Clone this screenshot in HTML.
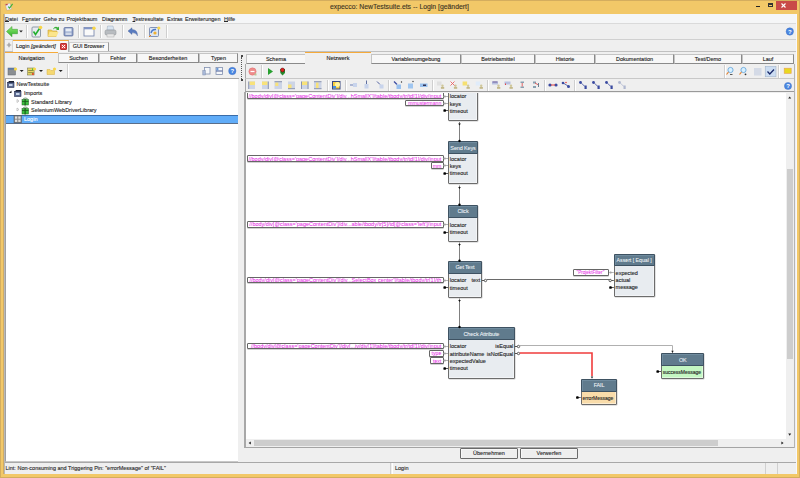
<!DOCTYPE html>
<html><head><meta charset="utf-8">
<style>
*{box-sizing:border-box;margin:0;padding:0}
html,body{width:800px;height:478px;overflow:hidden}
body{position:relative;background:#F2C868;font-family:"Liberation Sans",sans-serif;font-size:5.5px;color:#2a2a2a;-webkit-text-stroke:0.12px currentColor}
.a{position:absolute}
.t{position:absolute;white-space:nowrap;line-height:1}
.tab{position:absolute;background:#F7F7F7;border:1px solid #C4C4C4;border-right-color:#8A8A8A;border-bottom-color:#8A8A8A;text-align:center;line-height:8px;white-space:nowrap;color:#222}
.tsel{position:absolute;background:#EFEFEF;border-top:1.5px solid #F5AA3A;text-align:center;white-space:nowrap;color:#222;line-height:8px;padding-top:1px}
.sep{position:absolute;width:2px;border-left:1px solid #CFCFCF;border-right:1px solid #FFFFFF}
.ico{position:absolute}
u{text-decoration-thickness:0.5px;text-underline-offset:-0.2px}
</style></head><body>

<!-- title bar -->
<div class="a" style="left:0;top:0;width:800px;height:478px;border:1px solid #D4AD5E"></div>
<div class="t" style="left:330px;top:4px;font-size:6.85px;color:#3b3323">expecco: NewTestsuite.ets -- Login [geändert]</div>
<!-- app icon -->
<svg class="a" style="left:4px;top:2px" width="10" height="9" viewBox="0 0 10 9">
 <path d="M1.2 2.2 L6.2 1 L7.8 7.2 L2.8 8.6Z" fill="#E6ECF8" stroke="#C89A50" stroke-width="0.4"/>
 <path d="M1.4 2.3 L3.5 1.8 L3.8 3 L1.7 3.5Z" fill="#C04848"/>
 <path d="M4.2 4.6 L5.6 6 L8.6 1.8" fill="none" stroke="#40B040" stroke-width="1.2"/>
</svg>
<!-- window controls -->
<div class="a" style="left:756px;top:6px;width:4px;height:1px;background:#222"></div>
<div class="a" style="left:768px;top:3px;width:5px;height:4px;border:1px solid #333;border-top-width:2px"></div>
<div class="a" style="left:776px;top:1px;width:21px;height:9px;background:#C94A48"></div>


<!-- client area -->
<div class="a" style="left:3px;top:14px;width:794px;height:460px;background:#EFEFEF;border-left:1px solid #D2AC62;border-right:1px solid #F8F8FC"></div>
<div class="a" style="left:4px;top:14px;width:1px;height:460px;background:#B8B8B8"></div>

<!-- menu bar -->
<div class="a" style="left:5px;top:14px;width:791px;height:10px;background:#F5F6F7;border-bottom:1px solid #DADADA"></div>
<div class="t" style="left:5px;top:17px"><u>D</u>atei</div>
<div class="t" style="left:22px;top:17px">F<u>e</u>nster</div>
<div class="t" style="left:43.5px;top:17px">Gehe zu</div>
<div class="t" style="left:66.5px;top:17px">Projektbaum</div>
<div class="t" style="left:102px;top:17px">Diagramm</div>
<div class="t" style="left:132.5px;top:17px"><u>T</u>estresultate</div>
<div class="t" style="left:167px;top:17px">Extras</div>
<div class="t" style="left:185px;top:17px">Erweiterungen</div>
<div class="t" style="left:224px;top:17px"><u>H</u>ilfe</div>

<!-- main toolbar -->
<div class="a" style="left:5px;top:24px;width:791px;height:16px;background:#EFEFEF;border-bottom:1px solid #D0D0D0"></div>
<div class="sep" style="left:26px;top:25px;height:13px"></div>
<div class="sep" style="left:78px;top:25px;height:13px"></div>
<div class="sep" style="left:100px;top:25px;height:13px"></div>
<div class="sep" style="left:122px;top:25px;height:13px"></div>
<div class="sep" style="left:144px;top:25px;height:13px"></div>
<div class="sep" style="left:166px;top:25px;height:13px"></div>

<!-- editor tab bar -->
<div class="a" style="left:5px;top:51px;width:791px;height:1px;background:#C0C0C0"></div>
<div class="a" style="left:5px;top:40px;width:8px;height:11px;background:#F0F0F0;border-right:1px solid #D8D8D8"></div><svg class="a" style="left:6px;top:42px" width="6" height="6" viewBox="0 0 6 6"><path d="M3 0.8 V5.2 M0.8 3 H5.2" stroke="#9A9A9A" stroke-width="1.2"/></svg>
<div class="a" style="left:13px;top:40px;width:56px;height:12px;background:#F7F7F7;border-top:1.5px solid #F5AA3A;border-right:1px solid #B0B0B0"></div>
<div class="t" style="left:16px;top:44px;color:#222">Login <i>[geändert]</i></div>
<div class="a" style="left:60px;top:43px;width:7px;height:6.5px;background:#DC4848;border-radius:1px;border:0.5px solid #B83030"></div>
<svg class="a" style="left:60px;top:43px" width="7" height="7" viewBox="0 0 7 7"><path d="M2 2 L5 5 M5 2 L2 5" stroke="#fff" stroke-width="1"/></svg>
<div class="tab" style="left:68.5px;top:42px;width:40px;height:9px;line-height:7.5px;border-bottom:none;border-color:#D0D0D0 #9A9A9A #9A9A9A #D0D0D0;background:#F8F8F8">GUI Browser</div>

<!-- LEFT PANEL -->
<div class="tsel" style="left:5px;top:52px;width:53px;height:11px">Navigation</div>
<div class="tab" style="left:58px;top:53px;width:41px;height:10px">Suchen</div>
<div class="tab" style="left:99px;top:53px;width:38px;height:10px">Fehler</div>
<div class="tab" style="left:137px;top:53px;width:62px;height:10px">Besonderheiten</div>
<div class="tab" style="left:199px;top:53px;width:39px;height:10px">Typen</div>
<!-- left toolbar -->
<div class="a" style="left:5px;top:63px;width:234px;height:16px;background:#EFEFEF;border-bottom:1px solid #A8A8A8"></div>
<div class="sep" style="left:67px;top:64px;height:14px"></div>
<!-- tree -->
<div class="a" style="left:5px;top:79px;width:233px;height:383px;background:#FFFFFF;border-left:1px solid #A0A0A0;border-bottom:1px solid #C8C8C8"></div>
<div class="a" style="left:6px;top:115px;width:231.5px;height:9px;background:#60ACF8;border-top:1px solid #3A6CA8;border-bottom:1px solid #5A6E8A"></div>
<div class="t" style="left:16.5px;top:82px">NewTestsuite</div>
<div class="t" style="left:24px;top:90.5px">Imports</div>
<div class="t" style="left:31px;top:99.5px">Standard Library</div>
<div class="t" style="left:31px;top:108px">SeleniumWebDriverLibrary</div>
<div class="t" style="left:24px;top:117px;color:#fff">Login</div>

<!-- splitter -->
<div class="a" style="left:241px;top:57px;width:2px;height:22px;border-left:1px dotted #555"></div>
<div class="a" style="left:240.6px;top:54.6px;width:2px;height:2.2px;border-radius:50%;background:#111"></div>
<div class="a" style="left:240.6px;top:78.6px;width:2px;height:2.2px;border-radius:50%;background:#111"></div>

<!-- RIGHT PANEL -->
<div class="tab" style="left:246px;top:54px;width:60px;height:10px">Schema</div>
<div class="tsel" style="left:305px;top:52px;width:66px;height:12px">Netzwerk</div>
<div class="tab" style="left:371px;top:54px;width:90px;height:10px">Variablenumgebung</div>
<div class="tab" style="left:461px;top:54px;width:74px;height:10px">Betriebsmittel</div>
<div class="tab" style="left:535px;top:54px;width:60px;height:10px">Historie</div>
<div class="tab" style="left:595px;top:54px;width:79px;height:10px">Dokumentation</div>
<div class="tab" style="left:674px;top:54px;width:68px;height:10px">Test/Demo</div>
<div class="tab" style="left:742px;top:54px;width:52px;height:10px">Lauf</div>
<!-- toolbar1 -->
<div class="a" style="left:245px;top:64px;width:549px;height:15px;background:#EFEFEF;border-left:1px solid #A8A8A8;border-bottom:1px solid #C8C8C8"></div>
<div class="sep" style="left:261px;top:65px;height:13px"></div>
<div class="sep" style="left:724px;top:65px;height:13px"></div>
<div class="sep" style="left:778px;top:65px;height:13px"></div>
<!-- toolbar2 -->
<div class="a" style="left:245px;top:79px;width:549px;height:13px;background:#EFEFEF;border-left:1px solid #A8A8A8;border-bottom:1px solid #9A9A9A"></div>
<div class="sep" style="left:327px;top:80px;height:11px"></div>
<div class="sep" style="left:345px;top:80px;height:11px"></div>
<div class="sep" style="left:388px;top:80px;height:11px"></div>
<div class="sep" style="left:432px;top:80px;height:11px"></div>
<div class="sep" style="left:487px;top:80px;height:11px"></div>
<div class="sep" style="left:544px;top:80px;height:11px"></div>
<div class="sep" style="left:574px;top:80px;height:11px"></div>

<!-- canvas -->
<div class="a" style="left:244px;top:92px;width:551px;height:356px;background:#EFEFEF;border-left:2px solid #A8A8A8;border-bottom:1px solid #A4A4A4"></div>
<div class="a" id="canvas" style="left:246px;top:93px;width:540px;height:346px;background:#FFFFFF;overflow:hidden"><div class="a" style="left:-246px;top:-93px;width:800px;height:478px">
<div class="a" style="left:247px;top:92px;width:196.5px;height:7px;background:#fff;border:1px solid #666;border-radius:1px;box-shadow:0 0.6px 0 #A8A8A8;overflow:hidden"><div class="t" style="left:0;right:1.2px;top:1px;text-align:right;color:#E838E8;font-size:5.5px;-webkit-text-stroke:0.06px #E838E8;text-decoration:underline;text-decoration-thickness:0.3px">//body/div[@class='pageContentDiv']/div...hSmallX']/table/tbody/tr/td[1]/div/input</div></div>
<div class="a" style="left:405px;top:99.6px;width:38.5px;height:6.900000000000006px;background:#fff;border:1px solid #666;border-radius:1px;box-shadow:0 0.6px 0 #A8A8A8;overflow:hidden"><div class="t" style="left:0;right:1.2px;top:0.7000000000000028px;text-align:right;color:#E838E8;font-size:5.2px;-webkit-text-stroke:0.06px #E838E8;text-decoration:underline;text-decoration-thickness:0.3px">mmustermann</div></div>
<div class="a" style="left:247px;top:155px;width:196.5px;height:6.5px;background:#fff;border:1px solid #666;border-radius:1px;box-shadow:0 0.6px 0 #A8A8A8;overflow:hidden"><div class="t" style="left:0;right:1.2px;top:0.5999999999999943px;text-align:right;color:#E838E8;font-size:5.5px;-webkit-text-stroke:0.06px #E838E8;text-decoration:underline;text-decoration-thickness:0.3px">//body/div[@class='pageContentDiv']/div...hSmallX']/table/tbody/tr/td[1]/div/input</div></div>
<div class="a" style="left:431px;top:162px;width:12.5px;height:6.800000000000011px;background:#fff;border:1px solid #666;border-radius:1px;box-shadow:0 0.6px 0 #A8A8A8;overflow:hidden"><div class="t" style="left:0;right:1.2px;top:0.9000000000000057px;text-align:right;color:#E838E8;font-size:5.2px;-webkit-text-stroke:0.06px #E838E8;text-decoration:underline;text-decoration-thickness:0.3px">mm</div></div>
<div class="a" style="left:247px;top:221.3px;width:196.5px;height:6.5px;background:#fff;border:1px solid #666;border-radius:1px;box-shadow:0 0.6px 0 #A8A8A8;overflow:hidden"><div class="t" style="left:0;right:1.2px;top:0.19999999999998863px;text-align:right;color:#E838E8;font-size:5.5px;-webkit-text-stroke:0.06px #E838E8;text-decoration:underline;text-decoration-thickness:0.3px">//body/div[@class='pageContentDiv']/div...able/tbody/tr[5]/td[@class='left']/input</div></div>
<div class="a" style="left:247px;top:276.5px;width:196.5px;height:6.5px;background:#fff;border:1px solid #666;border-radius:1px;box-shadow:0 0.6px 0 #A8A8A8;overflow:hidden"><div class="t" style="left:0;right:1.2px;top:0.5px;text-align:right;color:#E838E8;font-size:5.5px;-webkit-text-stroke:0.06px #E838E8;text-decoration:underline;text-decoration-thickness:0.3px">//body/div[@class='pageContentDiv']/div...SelectBox center']/table/tbody/tr[1]/th</div></div>
<div class="a" style="left:247px;top:342.5px;width:196.5px;height:6.5px;background:#fff;border:1px solid #666;border-radius:1px;box-shadow:0 0.6px 0 #A8A8A8;overflow:hidden"><div class="t" style="left:0;right:1.2px;top:0.5px;text-align:right;color:#E838E8;font-size:5.5px;-webkit-text-stroke:0.06px #E838E8;text-decoration:underline;text-decoration-thickness:0.3px">//body/div[@class='pageContentDiv']/div[...iv/div[1]/table/tbody/tr/td[1]/div/input</div></div>
<div class="a" style="left:429px;top:350px;width:14.5px;height:6.600000000000023px;background:#fff;border:1px solid #666;border-radius:1px;box-shadow:0 0.6px 0 #A8A8A8;overflow:hidden"><div class="t" style="left:0;right:1.2px;top:0.39999999999997726px;text-align:right;color:#E838E8;font-size:5.2px;-webkit-text-stroke:0.06px #E838E8;text-decoration:underline;text-decoration-thickness:0.3px">type</div></div>
<div class="a" style="left:430px;top:357.3px;width:13.5px;height:6.5px;background:#fff;border:1px solid #666;border-radius:1px;box-shadow:0 0.6px 0 #A8A8A8;overflow:hidden"><div class="t" style="left:0;right:1.2px;top:0.39999999999997726px;text-align:right;color:#E838E8;font-size:5.2px;-webkit-text-stroke:0.06px #E838E8;text-decoration:underline;text-decoration-thickness:0.3px">text</div></div>
<div class="a" style="left:573px;top:269px;width:36px;height:6.5px;background:#fff;border:1px solid #666;border-radius:1px;box-shadow:0 0.6px 0 #A8A8A8;overflow:hidden"><div class="t" style="left:0;right:1.2px;top:0.5px;text-align:center;color:#E838E8;font-size:4.6px;-webkit-text-stroke:0.06px #E838E8;text-decoration:underline;text-decoration-thickness:0.3px">"ProjektFilter"</div></div>
<div class="a" style="left:448px;top:60px;width:30px;height:61px;background:#E8ECF0;border:1px solid #6C6C6C;border-bottom-width:1.4px;border-radius:1px;box-shadow:inset -0.7px -0.7px 0 rgba(255,255,255,0.6),0.5px 0.5px 0 #C8C8C8"></div>
<div class="a" style="left:448px;top:60px;width:30px;height:12px;background:#607B8D;border:1px solid #3E5262;border-radius:1px 1px 0 0;box-shadow:inset 0.7px 0.7px 0 rgba(140,170,190,0.5)"></div>
<div class="t" style="left:449.8px;top:94.2px;color:#262626;font-size:5.5px">locator</div>
<div class="t" style="left:449.8px;top:101.7px;color:#262626;font-size:5.5px">keys</div>
<div class="t" style="left:449.8px;top:108.8px;color:#262626;font-size:5.5px">timeout</div>
<div class="a" style="left:448px;top:141.2px;width:30px;height:43.30000000000001px;background:#E8ECF0;border:1px solid #6C6C6C;border-bottom-width:1.4px;border-radius:1px;box-shadow:inset -0.7px -0.7px 0 rgba(255,255,255,0.6),0.5px 0.5px 0 #C8C8C8"></div>
<div class="a" style="left:448px;top:141.2px;width:30px;height:12.400000000000006px;background:#607B8D;border:1px solid #3E5262;border-radius:1px 1px 0 0;box-shadow:inset 0.7px 0.7px 0 rgba(140,170,190,0.5)"></div>
<div class="t" style="left:448px;top:145.59999999999997px;width:30px;text-align:center;color:#F2F6F9;font-size:5.5px;letter-spacing:-0.15px;-webkit-text-stroke:0.06px #F2F6F9">Send Keys</div>
<div class="t" style="left:449.8px;top:156.79999999999998px;color:#262626;font-size:5.5px">locator</div>
<div class="t" style="left:449.8px;top:164.1px;color:#262626;font-size:5.5px">keys</div>
<div class="t" style="left:449.8px;top:171.29999999999998px;color:#262626;font-size:5.5px">timeout</div>
<div class="a" style="left:448px;top:205px;width:30px;height:36.5px;background:#E8ECF0;border:1px solid #6C6C6C;border-bottom-width:1.4px;border-radius:1px;box-shadow:inset -0.7px -0.7px 0 rgba(255,255,255,0.6),0.5px 0.5px 0 #C8C8C8"></div>
<div class="a" style="left:448px;top:205px;width:30px;height:12.5px;background:#607B8D;border:1px solid #3E5262;border-radius:1px 1px 0 0;box-shadow:inset 0.7px 0.7px 0 rgba(140,170,190,0.5)"></div>
<div class="t" style="left:448px;top:209.45px;width:30px;text-align:center;color:#F2F6F9;font-size:5.5px;letter-spacing:-0.2px;-webkit-text-stroke:0.06px #F2F6F9">Click</div>
<div class="t" style="left:449.8px;top:222.7px;color:#262626;font-size:5.5px">locator</div>
<div class="t" style="left:449.8px;top:230.2px;color:#262626;font-size:5.5px">timeout</div>
<div class="a" style="left:448px;top:261px;width:33.80000000000001px;height:36.80000000000001px;background:#E8ECF0;border:1px solid #6C6C6C;border-bottom-width:1.4px;border-radius:1px;box-shadow:inset -0.7px -0.7px 0 rgba(255,255,255,0.6),0.5px 0.5px 0 #C8C8C8"></div>
<div class="a" style="left:448px;top:261px;width:33.80000000000001px;height:12.5px;background:#607B8D;border:1px solid #3E5262;border-radius:1px 1px 0 0;box-shadow:inset 0.7px 0.7px 0 rgba(140,170,190,0.5)"></div>
<div class="t" style="left:448px;top:265.45px;width:33.80000000000001px;text-align:center;color:#F2F6F9;font-size:5.5px;letter-spacing:-0.2px;-webkit-text-stroke:0.06px #F2F6F9">Get Text</div>
<div class="t" style="left:449.8px;top:278.2px;color:#262626;font-size:5.5px">locator</div>
<div class="t" style="left:449.8px;top:285.5px;color:#262626;font-size:5.5px">timeout</div>
<div class="t" style="left:448px;top:278.2px;width:32.30000000000001px;text-align:right;color:#262626">text</div>
<div class="a" style="left:448px;top:327.2px;width:66.79999999999995px;height:51.60000000000002px;background:#E8ECF0;border:1px solid #6C6C6C;border-bottom-width:1.4px;border-radius:1px;box-shadow:inset -0.7px -0.7px 0 rgba(255,255,255,0.6),0.5px 0.5px 0 #C8C8C8"></div>
<div class="a" style="left:448px;top:327.2px;width:66.79999999999995px;height:12.400000000000034px;background:#607B8D;border:1px solid #3E5262;border-radius:1px 1px 0 0;box-shadow:inset 0.7px 0.7px 0 rgba(140,170,190,0.5)"></div>
<div class="t" style="left:448px;top:331.59999999999997px;width:66.79999999999995px;text-align:center;color:#F2F6F9;font-size:5.5px;letter-spacing:-0.1px;-webkit-text-stroke:0.06px #F2F6F9">Check Attribute</div>
<div class="t" style="left:449.8px;top:344.2px;color:#262626;font-size:5.5px">locator</div>
<div class="t" style="left:449.8px;top:351.59999999999997px;color:#262626;font-size:5.5px">attributeName</div>
<div class="t" style="left:449.8px;top:358.9px;color:#262626;font-size:5.5px">expectedValue</div>
<div class="t" style="left:449.8px;top:366.2px;color:#262626;font-size:5.5px">timeout</div>
<div class="t" style="left:448px;top:344.2px;width:65.29999999999995px;text-align:right;color:#262626">isEqual</div>
<div class="t" style="left:448px;top:351.59999999999997px;width:65.29999999999995px;text-align:right;color:#262626">isNotEqual</div>
<div class="a" style="left:613.8px;top:254px;width:40.80000000000007px;height:43.39999999999998px;background:#E8ECF0;border:1px solid #6C6C6C;border-bottom-width:1.4px;border-radius:1px;box-shadow:inset -0.7px -0.7px 0 rgba(255,255,255,0.6),0.5px 0.5px 0 #C8C8C8"></div>
<div class="a" style="left:613.8px;top:254px;width:40.80000000000007px;height:12.399999999999977px;background:#607B8D;border:1px solid #3E5262;border-radius:1px 1px 0 0;box-shadow:inset 0.7px 0.7px 0 rgba(140,170,190,0.5)"></div>
<div class="t" style="left:613.8px;top:258.4px;width:40.80000000000007px;text-align:center;color:#F2F6F9;font-size:5.2px;letter-spacing:0px;-webkit-text-stroke:0.06px #F2F6F9">Assert [ Equal ]</div>
<div class="t" style="left:615.5999999999999px;top:270.7px;color:#262626;font-size:5.5px">expected</div>
<div class="t" style="left:615.5999999999999px;top:278.2px;color:#262626;font-size:5.5px">actual</div>
<div class="t" style="left:615.5999999999999px;top:285.4px;color:#262626;font-size:5.5px">message</div>
<div class="a" style="left:661px;top:353px;width:43.299999999999955px;height:25.80000000000001px;background:#C4F7C2;border:1px solid #6C6C6C;border-bottom-width:1.4px;border-radius:1px;box-shadow:inset -0.7px -0.7px 0 rgba(255,255,255,0.6),0.5px 0.5px 0 #C8C8C8"></div>
<div class="a" style="left:661px;top:353px;width:43.299999999999955px;height:12.800000000000011px;background:#607B8D;border:1px solid #3E5262;border-radius:1px 1px 0 0;box-shadow:inset 0.7px 0.7px 0 rgba(140,170,190,0.5)"></div>
<div class="t" style="left:661px;top:357.59999999999997px;width:43.299999999999955px;text-align:center;color:#F2F6F9;font-size:5.5px;letter-spacing:-0.2px;-webkit-text-stroke:0.06px #F2F6F9">OK</div>
<div class="t" style="left:662.8px;top:370.09999999999997px;color:#262626;font-size:5.0px">successMessage</div>
<div class="a" style="left:580.7px;top:378.8px;width:36.69999999999993px;height:26.0px;background:#F9DCAA;border:1px solid #6C6C6C;border-bottom-width:1.4px;border-radius:1px;box-shadow:inset -0.7px -0.7px 0 rgba(255,255,255,0.6),0.5px 0.5px 0 #C8C8C8"></div>
<div class="a" style="left:580.7px;top:378.8px;width:36.69999999999993px;height:12.800000000000011px;background:#607B8D;border:1px solid #3E5262;border-radius:1px 1px 0 0;box-shadow:inset 0.7px 0.7px 0 rgba(140,170,190,0.5)"></div>
<div class="t" style="left:580.7px;top:383.40000000000003px;width:36.69999999999993px;text-align:center;color:#F2F6F9;font-size:5.5px;letter-spacing:-0.2px;-webkit-text-stroke:0.06px #F2F6F9">FAIL</div>
<div class="t" style="left:582.5px;top:395.5px;color:#262626;font-size:5.0px">errorMessage</div>
<svg class="a" style="left:0;top:0" width="800" height="478" viewBox="0 0 800 478"><line x1="459.5" y1="122" x2="459.5" y2="141.2" stroke="#808080" stroke-width="1"/><path d="M458.2 123.6 L460.8 123.6 L459.5 125.6Z" fill="#111"/><circle cx="459.5" cy="141.0" r="1.2" fill="#000"/><line x1="459.5" y1="185.5" x2="459.5" y2="205" stroke="#808080" stroke-width="1"/><path d="M458.2 187.1 L460.8 187.1 L459.5 189.1Z" fill="#111"/><circle cx="459.5" cy="204.8" r="1.2" fill="#000"/><line x1="459.5" y1="242.5" x2="459.5" y2="261" stroke="#808080" stroke-width="1"/><path d="M458.2 244.1 L460.8 244.1 L459.5 246.1Z" fill="#111"/><circle cx="459.5" cy="260.8" r="1.2" fill="#000"/><line x1="459.5" y1="298.5" x2="459.5" y2="327.2" stroke="#808080" stroke-width="1"/><path d="M458.2 300.1 L460.8 300.1 L459.5 302.1Z" fill="#111"/><circle cx="459.5" cy="327.0" r="1.2" fill="#000"/><line x1="443.5" y1="96.5" x2="448" y2="96.5" stroke="#B4B4B4" stroke-width="1"/><rect x="443.7" y="95.5" width="2.2" height="2" rx="0.8" fill="#A4A4A4"/><line x1="443.5" y1="103.5" x2="448" y2="103.5" stroke="#B4B4B4" stroke-width="1"/><rect x="443.7" y="102.5" width="2.2" height="2" rx="0.8" fill="#A4A4A4"/><line x1="445" y1="110.5" x2="448" y2="110.5" stroke="#555" stroke-width="1"/><rect x="443.4" y="109.2" width="2.6" height="2.6" rx="0.9" fill="#000"/><line x1="443.5" y1="158.5" x2="448" y2="158.5" stroke="#B4B4B4" stroke-width="1"/><rect x="443.7" y="157.5" width="2.2" height="2" rx="0.8" fill="#A4A4A4"/><line x1="443.5" y1="165.5" x2="448" y2="165.5" stroke="#B4B4B4" stroke-width="1"/><rect x="443.7" y="164.5" width="2.2" height="2" rx="0.8" fill="#A4A4A4"/><line x1="445" y1="173.5" x2="448" y2="173.5" stroke="#555" stroke-width="1"/><rect x="443.4" y="172.2" width="2.6" height="2.6" rx="0.9" fill="#000"/><line x1="443.5" y1="224.5" x2="448" y2="224.5" stroke="#B4B4B4" stroke-width="1"/><rect x="443.7" y="223.5" width="2.2" height="2" rx="0.8" fill="#A4A4A4"/><line x1="445" y1="232.5" x2="448" y2="232.5" stroke="#555" stroke-width="1"/><rect x="443.4" y="231.2" width="2.6" height="2.6" rx="0.9" fill="#000"/><line x1="443.5" y1="280.5" x2="448" y2="280.5" stroke="#B4B4B4" stroke-width="1"/><rect x="443.7" y="279.5" width="2.2" height="2" rx="0.8" fill="#A4A4A4"/><line x1="445" y1="287.5" x2="448" y2="287.5" stroke="#555" stroke-width="1"/><rect x="443.4" y="286.2" width="2.6" height="2.6" rx="0.9" fill="#000"/><line x1="481.8" y1="280.5" x2="484.3" y2="280.5" stroke="#555" stroke-width="1"/><circle cx="485.5" cy="280.5" r="1.2" fill="#fff" stroke="#333" stroke-width="0.8"/><line x1="443.5" y1="346.5" x2="448" y2="346.5" stroke="#B4B4B4" stroke-width="1"/><rect x="443.7" y="345.5" width="2.2" height="2" rx="0.8" fill="#A4A4A4"/><line x1="443.5" y1="353.5" x2="448" y2="353.5" stroke="#B4B4B4" stroke-width="1"/><rect x="443.7" y="352.5" width="2.2" height="2" rx="0.8" fill="#A4A4A4"/><line x1="443.5" y1="360.5" x2="448" y2="360.5" stroke="#B4B4B4" stroke-width="1"/><rect x="443.7" y="359.5" width="2.2" height="2" rx="0.8" fill="#A4A4A4"/><line x1="445" y1="368.5" x2="448" y2="368.5" stroke="#555" stroke-width="1"/><rect x="443.4" y="367.2" width="2.6" height="2.6" rx="0.9" fill="#000"/><line x1="514.8" y1="346.5" x2="517.3" y2="346.5" stroke="#555" stroke-width="1"/><circle cx="518.5" cy="346.5" r="1.2" fill="#fff" stroke="#333" stroke-width="0.8"/><line x1="514.8" y1="353.5" x2="517.3" y2="353.5" stroke="#555" stroke-width="1"/><circle cx="518.5" cy="353.5" r="1.2" fill="#fff" stroke="#333" stroke-width="0.8"/><line x1="609.3" y1="272.5" x2="613.8" y2="272.5" stroke="#B4B4B4" stroke-width="1"/><rect x="609.5" y="271.5" width="2.2" height="2" rx="0.8" fill="#A4A4A4"/><line x1="611.3" y1="280.5" x2="613.8" y2="280.5" stroke="#555" stroke-width="1"/><circle cx="610.1999999999999" cy="280.5" r="1.2" fill="#fff" stroke="#333" stroke-width="0.8"/><line x1="610.8" y1="287.5" x2="613.8" y2="287.5" stroke="#555" stroke-width="1"/><rect x="609.1999999999999" y="286.2" width="2.6" height="2.6" rx="0.9" fill="#000"/><line x1="658" y1="371.5" x2="661" y2="371.5" stroke="#555" stroke-width="1"/><rect x="656.4" y="370.2" width="2.6" height="2.6" rx="0.9" fill="#000"/><line x1="577.7" y1="397.5" x2="580.7" y2="397.5" stroke="#555" stroke-width="1"/><rect x="576.1" y="396.2" width="2.6" height="2.6" rx="0.9" fill="#000"/><line x1="486.8" y1="279.5" x2="609.3" y2="279.5" stroke="#6A6A6A" stroke-width="1"/><polyline points="519.8,345.5 672.5,345.5 672.5,352.8" fill="none" stroke="#B0B0B0" stroke-width="1"/><path d="M671.3 350.8 L673.7 350.8 L672.5 353Z" fill="#222"/><polyline points="519.8,353 592,353 592,376" fill="none" stroke="#F03C3C" stroke-width="1.6"/><path d="M590.8 376.6 L593.2 376.6 L592 378.8Z" fill="#222"/></svg>
</div></div>
<!-- scrollbars -->
<div class="a" style="left:787px;top:169px;width:6px;height:190px;background:#CDCDCD"></div>
<div class="a" style="left:254px;top:440px;width:464px;height:6px;background:#CDCDCD"></div>
<svg class="a" style="left:0;top:0" width="800" height="478" viewBox="0 0 800 478">
 <path d="M788.2 98.6 L791.2 98.6 L789.7 96.4Z" fill="#222"/>
 <path d="M788.2 433.6 L791.2 433.6 L789.7 435.8Z" fill="#222"/>
 <path d="M250.8 441.5 L250.8 444.5 L248.6 443Z" fill="#222"/>
 <path d="M781.4 441.5 L781.4 444.5 L783.6 443Z" fill="#222"/>
 <circle cx="771" cy="468.2" r="2.7" fill="none" stroke="#8A8A8A" stroke-width="0.7"/>
 <line x1="768.3" y1="468.2" x2="773.7" y2="468.2" stroke="#8A8A8A" stroke-width="0.6"/>
 <line x1="781.5" y1="3.5" x2="785.5" y2="7.5" stroke="#fff" stroke-width="1.1"/>
 <line x1="785.5" y1="3.5" x2="781.5" y2="7.5" stroke="#fff" stroke-width="1.1"/>
</svg>
<div class="a" style="left:794px;top:64px;width:1px;height:384px;background:#B4B4B4"></div>

<!-- button bar -->
<div class="a" style="left:460px;top:448px;width:58px;height:11px;background:#EEEEEE;border:1px solid #6A6A6A;border-radius:1px;box-shadow:inset 0.6px 0.6px 0 #fff;text-align:center;line-height:9px">Übernehmen</div>
<div class="a" style="left:520px;top:448px;width:58px;height:11px;background:#EEEEEE;border:1px solid #6A6A6A;border-radius:1px;box-shadow:inset 0.6px 0.6px 0 #fff;text-align:center;line-height:9px">Verwerfen</div>

<!-- status bar -->
<div class="a" style="left:5px;top:462px;width:791px;height:1px;background:#A8A8A8"></div>
<div class="a" style="left:5px;top:463px;width:791px;height:11px;background:#EFEFEF"></div>
<div class="t" style="left:5.5px;top:465.5px">Lint: Non-consuming and Triggering Pin: "errorMessage" of "FAIL"</div>
<div class="a" style="left:390px;top:463px;width:3px;height:11px;border-left:1px solid #D0D0D0;border-right:1px solid #fff"></div>
<div class="t" style="left:395px;top:465.5px">Login</div>
<div class="a" style="left:765px;top:463px;width:1px;height:11px;background:#D0D0D0"></div>
<div class="a" style="left:777px;top:463px;width:1px;height:11px;background:#D0D0D0"></div>

<!-- ICONS main toolbar -->
<svg class="a" style="left:5px;top:25px" width="20" height="14" viewBox="0 0 20 14">
 <defs><linearGradient id="gA" x1="0" y1="0" x2="0" y2="1"><stop offset="0" stop-color="#8EE870"/><stop offset="1" stop-color="#2FB02A"/></linearGradient></defs>
 <path d="M1.5 6.5 L7 1.5 L7 4.3 L12.5 4.3 L12.5 8.7 L7 8.7 L7 11.8 Z" fill="url(#gA)" stroke="#3A9A30" stroke-width="0.5"/>
 <path d="M14.2 5.4 L17.8 5.4 L16 7.4 Z" fill="#222"/>
</svg>
<svg class="a" style="left:31px;top:25px" width="12" height="13" viewBox="0 0 12 13">
 <rect x="1" y="2" width="8.5" height="10" rx="1" fill="#E8ECF0" stroke="#7A8694" stroke-width="0.8"/>
 <path d="M2.5 6.5 L4.5 9.5 L8.5 3.5" fill="none" stroke="#22B030" stroke-width="1.6"/>
 <circle cx="9.5" cy="2.5" r="1.8" fill="#F8D648"/>
</svg>
<svg class="a" style="left:47px;top:25px" width="13" height="13" viewBox="0 0 13 13">
 <path d="M1 5 L4.5 5 L5.5 6 L10 6 L9 11.5 L1 11.5 Z" fill="#F2D060" stroke="#C8A030" stroke-width="0.6"/>
 <path d="M2.5 7 L11.5 7 L9.5 11.5 L1 11.5 Z" fill="#FBE58C"/>
 <path d="M6 4 Q8 0.5 11 2.5 L12 1.5 L12 5 L9 5 L10 4 Q8 2.5 6 4.5Z" fill="#3AAE3A"/>
</svg>
<svg class="a" style="left:63px;top:26px" width="11" height="11" viewBox="0 0 11 11">
 <rect x="1" y="1.5" width="9" height="8.5" rx="1" fill="#8FA0C8" stroke="#58689A" stroke-width="0.7"/>
 <rect x="2.5" y="2.5" width="6" height="3" fill="#E8EDF5"/>
 <rect x="2.5" y="6.5" width="6" height="2.5" fill="#D0D8E8"/>
</svg>
<svg class="a" style="left:83px;top:26px" width="13" height="11" viewBox="0 0 13 11">
 <rect x="1" y="1.5" width="10" height="8.5" fill="#FAFAFA" stroke="#7080A8" stroke-width="0.8"/>
 <rect x="1" y="1.5" width="10" height="1.8" fill="#8296C8"/>
 <circle cx="11" cy="2.2" r="1.7" fill="#F8D648"/>
</svg>
<svg class="a" style="left:104px;top:25px" width="13" height="13" viewBox="0 0 13 13">
 <path d="M3.5 1 L9 1 L10 5 L3 5Z" fill="#D8E4F0" stroke="#9AA8B8" stroke-width="0.5"/>
 <rect x="1" y="5" width="11" height="5" rx="1.5" fill="#B8BCC0" stroke="#8A8E92" stroke-width="0.5"/>
 <rect x="3" y="9" width="7" height="3" fill="#E8E8E8" stroke="#A0A0A0" stroke-width="0.4"/>
</svg>
<svg class="a" style="left:127px;top:27px" width="12" height="10" viewBox="0 0 12 10">
 <path d="M1 4 L5 0.8 L5 2.6 Q10.5 2.6 10.5 8.8 Q9 5.6 5 5.6 L5 7.4 Z" fill="#5A7CC0" stroke="#44609A" stroke-width="0.4"/>
</svg>
<svg class="a" style="left:148px;top:26px" width="13" height="12" viewBox="0 0 13 12">
 <rect x="1.5" y="1.5" width="9" height="9" rx="1" fill="#DDE6F2" stroke="#6A7EA8" stroke-width="0.8"/>
 <path d="M3 7 Q4 3 8 3.5" fill="none" stroke="#4A78C8" stroke-width="1.4"/>
 <circle cx="7" cy="7" r="1.6" fill="#F0B030"/>
 <circle cx="10.8" cy="2" r="1.6" fill="#F8D648"/>
 <path d="M1 11 L3 9" stroke="#E08020" stroke-width="1"/>
</svg>

<!-- left toolbar icons -->
<svg class="a" style="left:7px;top:67px" width="58" height="9" viewBox="0 0 58 9">
 <rect x="1" y="1" width="7.5" height="7" fill="#8A8E92" stroke="#60666C" stroke-width="0.5"/>
 <rect x="1" y="1" width="7.5" height="1.6" fill="#5A78A8"/>
 <circle cx="8.5" cy="2" r="1.6" fill="#F8D648"/>
 <path d="M12.7 3 L16.7 3 L14.7 5 Z" fill="#222"/>
 <rect x="20.6" y="1" width="6.5" height="7" fill="#E8D868" stroke="#6A6A40" stroke-width="0.5"/>
 <rect x="21.2" y="3" width="5.5" height="0.8" fill="#7A7A3A"/>
 <rect x="21.2" y="5.3" width="5.5" height="0.8" fill="#7A7A3A"/>
 <rect x="25" y="1.3" width="1.8" height="2" fill="#50C040"/><rect x="25" y="6" width="1.8" height="2" fill="#E05030"/>
 <circle cx="27.5" cy="2" r="1.6" fill="#F8D648"/>
 <path d="M32 3 L36 3 L34 5 Z" fill="#222"/>
 <path d="M40 2.5 L43 2.5 L44 3.5 L47.5 3.5 L47.5 7.5 L40 7.5Z" fill="#F5D870" stroke="#D8B040" stroke-width="0.5"/>
 <circle cx="47.5" cy="2" r="1.6" fill="#F8D648"/>
 <path d="M51.7 3 L55.7 3 L53.7 5 Z" fill="#222"/>
</svg>
<svg class="a" style="left:202px;top:66px" width="35" height="10" viewBox="0 0 35 10">
 <rect x="2.5" y="1.5" width="5.5" height="6.5" fill="#F5F7FA" stroke="#8090B0" stroke-width="0.8"/>
 <rect x="0.8" y="4.5" width="2.5" height="4.5" fill="#A8B8D8" stroke="#8090B0" stroke-width="0.5"/>
 <rect x="14" y="1.5" width="6.5" height="7" fill="#F5F7FA" stroke="#8090B0" stroke-width="0.8"/>
 <rect x="14" y="4.5" width="6.5" height="1" fill="#4A5A90"/>
 <rect x="14.4" y="2" width="2" height="2.5" fill="#6A9AD8"/>
 <circle cx="30.3" cy="5" r="3.7" fill="#4A86E0" stroke="#3A6AC0" stroke-width="0.4"/>
 <text x="30.3" y="7.3" font-family="Liberation Sans" font-size="6" font-weight="bold" fill="#fff" text-anchor="middle">?</text>
</svg>
<!-- right toolbar1 icons -->
<svg class="a" style="left:248px;top:67px" width="40" height="10" viewBox="0 0 40 10">
 <circle cx="4.5" cy="4.5" r="3.7" fill="#EE8C8C" stroke="#E06A6A" stroke-width="0.4"/>
 <rect x="2.5" y="3.9" width="4" height="1.2" fill="#fff"/>
 <rect x="6.5" y="6.5" width="2" height="2" fill="#B8C898"/>
 <path d="M20 1 L25 4.5 L20 8 Z" fill="#28A030"/>
 <path d="M32.3 2 L37 2 L37 6 L34.5 8.5 L32.3 6Z" fill="#2A8A30"/>
 <circle cx="34.5" cy="3" r="2" fill="#E02020" stroke="#300" stroke-width="0.4"/>
</svg>
<svg class="a" style="left:725px;top:66px" width="70" height="12" viewBox="0 0 70 12">
 <circle cx="5.5" cy="4" r="2.6" fill="#D8F0FF" stroke="#5AA0D8" stroke-width="0.8"/>
 <path d="M3.5 6 L1.5 8.5" stroke="#E08030" stroke-width="1.2"/>
 <rect x="5" y="8" width="2.5" height="0.8" fill="#333"/>
 <circle cx="18.5" cy="4" r="2.6" fill="#D8F0FF" stroke="#5AA0D8" stroke-width="0.8"/>
 <path d="M16.5 6 L14.5 8.5" stroke="#E08030" stroke-width="1.2"/>
 <circle cx="20.5" cy="8.3" r="0.9" fill="#333"/>
 <rect x="29" y="2" width="7.5" height="7.5" fill="#D4DAE6"/>
 <rect x="40.2" y="0.2" width="10.8" height="10.6" fill="#CCDDF2" stroke="#9AAAC0" stroke-width="0.5"/>
 <path d="M42.5 5.5 L44.8 8 L49 3.5" fill="none" stroke="#1A2A6A" stroke-width="1.3"/>
 <rect x="59.2" y="2.2" width="7" height="5.2" fill="#E8D820" stroke="#E8A050" stroke-width="0.6"/>
</svg>
<!-- help icon toolbar2 -->
<svg class="a" style="left:784px;top:82px" width="8" height="8" viewBox="0 0 8 8">
 <circle cx="4" cy="4" r="3.6" fill="#4A86E0" stroke="#3A6AC0" stroke-width="0.4"/>
 <text x="4" y="6.3" font-family="Liberation Sans" font-size="6" font-weight="bold" fill="#fff" text-anchor="middle">?</text>
</svg>
<svg class="a" style="left:785px;top:27px" width="9" height="9" viewBox="0 0 9 9">
 <circle cx="4.8" cy="4.5" r="3.7" fill="#4A86E0" stroke="#3A6AC0" stroke-width="0.4"/>
 <text x="4.8" y="6.8" font-family="Liberation Sans" font-size="6" font-weight="bold" fill="#fff" text-anchor="middle">?</text>
</svg>
<!-- toolbar2 icons -->
<svg class="a" style="left:246px;top:78px" width="394" height="15" viewBox="0 0 394 15"><rect x="2.5" y="3.5" width="6.5" height="7.5" fill="#CCD4E6" opacity="1"/><rect x="3.5" y="3.5" width="5.5" height="3.5" fill="#F8E27A" opacity="1"/><rect x="2.1999999999999886" y="3.5" width="1" height="7.5" fill="#8A94B0" opacity="1"/><rect x="16" y="3.5" width="6.5" height="7.5" fill="#CCD4E6" opacity="1"/><rect x="16" y="3.5" width="5.5" height="3.5" fill="#F8E27A" opacity="1"/><rect x="21.80000000000001" y="3.5" width="1" height="7.5" fill="#8A94B0" opacity="1"/><rect x="28.5" y="3.5" width="7.5" height="7.5" fill="#CCD4E6" opacity="1"/><rect x="29.30000000000001" y="4.5" width="3" height="3.5" fill="#F8E27A" opacity="1"/><rect x="28.5" y="3.200000000000003" width="7.5" height="1" fill="#8A94B0" opacity="1"/><rect x="42" y="3.5" width="7" height="7.5" fill="#CCD4E6" opacity="1"/><rect x="42" y="6.5" width="3.5" height="4" fill="#F8E27A" opacity="1"/><rect x="42" y="10.200000000000003" width="7" height="1" fill="#8A94B0" opacity="1"/><rect x="55" y="3.5" width="7.5" height="7.5" fill="#CCD4E6" opacity="1"/><rect x="56" y="3.5" width="5.5" height="3.5" fill="#F8E27A" opacity="1"/><rect x="55" y="3.5" width="1" height="7.5" fill="#8A94B0" opacity="1"/><rect x="61.5" y="3.5" width="1" height="7.5" fill="#8A94B0" opacity="1"/><rect x="68" y="3.5" width="7.5" height="7.5" fill="#CCD4E6" opacity="1"/><rect x="70" y="4.5" width="2.5" height="6" fill="#F8E27A" opacity="1"/><rect x="68" y="3.200000000000003" width="7.5" height="1" fill="#8A94B0" opacity="1"/><rect x="68" y="10.200000000000003" width="7.5" height="1" fill="#8A94B0" opacity="1"/><rect x="86" y="3" width="8.5" height="8.5" fill="#3A4A80" opacity="1"/><rect x="87" y="4" width="6.5" height="6.5" fill="#F8D040" opacity="1"/><circle cx="91.5" cy="6.5" r="2.5" fill="#FFF5A0"/><rect x="87" y="8" width="3" height="2.5" fill="#4A90E0" opacity="1"/><line x1="104" y1="7" x2="107" y2="7" stroke="#8090C0" stroke-width="1.2"/><rect x="107" y="5" width="4" height="4" fill="#C8D4EC" opacity="1"/><rect x="118.5" y="6" width="4" height="4.5" fill="#C8D4EC" opacity="1"/><line x1="120.5" y1="2.5" x2="120.5" y2="6" stroke="#6070A0" stroke-width="1"/><line x1="131" y1="3.5" x2="134" y2="6.5" stroke="#5060A0" stroke-width="1"/><rect x="133.5" y="6.5" width="4" height="4" fill="#C8D4EC" opacity="1"/><line x1="148" y1="3.5" x2="151" y2="6.5" stroke="#3A4AA0" stroke-width="1.2"/><rect x="150.5" y="6.5" width="4.5" height="4.5" fill="#98C0EE" opacity="1"/><circle cx="155.5" cy="4" r="0.7" fill="#333"/><rect x="162" y="5.5" width="5" height="5" fill="#A0C6F0" opacity="1"/><circle cx="167" cy="3.5" r="0.7" fill="#333"/><rect x="174" y="5.5" width="7.5" height="3.5" fill="#98C0EE" opacity="1"/><rect x="177" y="6.5" width="3" height="1.5" fill="#335" opacity="1"/><rect x="191" y="3.5" width="4.5" height="4" fill="#E0E0E0" opacity="1"/><circle cx="196.5" cy="7.799999999999997" r="1.2" fill="#CFC79A"/><rect x="194.89999999999998" y="9" width="3.3" height="1.8" fill="#C4B888" opacity="1"/><rect x="204" y="3.5" width="4.5" height="4" fill="#F4F4F4" opacity="1"/><circle cx="209.5" cy="7.799999999999997" r="1.2" fill="#CFC79A"/><rect x="207.89999999999998" y="9" width="3.3" height="1.8" fill="#C4B888" opacity="1"/><rect x="216.60000000000002" y="3.5" width="4.5" height="4" fill="#F6E070" opacity="1"/><circle cx="222.10000000000002" cy="7.799999999999997" r="1.2" fill="#CFC79A"/><rect x="220.5" y="9" width="3.3" height="1.8" fill="#C4B888" opacity="1"/><rect x="229.7" y="3.5" width="4.5" height="4" fill="#E0ECFA" opacity="1"/><circle cx="235.2" cy="7.799999999999997" r="1.2" fill="#CFC79A"/><rect x="233.59999999999997" y="9" width="3.3" height="1.8" fill="#C4B888" opacity="1"/><line x1="204.5" y1="3.5" x2="208.5" y2="7.5" stroke="#E86060" stroke-width="0.9"/><line x1="208.5" y1="3.5" x2="204.5" y2="7.5" stroke="#E86060" stroke-width="0.9"/><rect x="246" y="3.5" width="6" height="3" fill="#B8C0E0" opacity="1"/><rect x="246.5" y="3.5" width="5" height="1" fill="#6A5A9A" opacity="1"/><circle cx="252.5" cy="7.799999999999997" r="1.2" fill="#CFC79A"/><rect x="251" y="9" width="3.3" height="1.8" fill="#C4B888" opacity="1"/><rect x="258.5" y="3.5" width="6" height="3" fill="#B8C0E0" opacity="1"/><rect x="259" y="5.5" width="1" height="1.5" fill="#E04040" opacity="1"/><circle cx="265" cy="7.799999999999997" r="1.2" fill="#CFC79A"/><rect x="263.5" y="9" width="3.3" height="1.8" fill="#C4B888" opacity="1"/><rect x="274.5" y="3.5" width="3.5" height="1.5" fill="#88A0B0" opacity="1"/><rect x="274.5" y="8.5" width="3.5" height="1.5" fill="#88A0B0" opacity="1"/><line x1="276.20000000000005" y1="5" x2="276.20000000000005" y2="8.5" stroke="#E04040" stroke-width="0.8"/><rect x="287" y="3.5" width="3" height="2" fill="#88A0B0" opacity="1"/><rect x="287" y="8" width="3" height="2" fill="#88A0B0" opacity="1"/><line x1="289" y1="5" x2="292.5" y2="7" stroke="#E04040" stroke-width="0.8"/><rect x="292" y="5" width="1" height="4" fill="#6A8090" opacity="1"/><circle cx="304" cy="7" r="1.6" fill="#3A4AA0"/><circle cx="310" cy="7" r="1.6" fill="#3A4AA0"/><line x1="305" y1="7" x2="309" y2="7" stroke="#E04040" stroke-width="1"/><circle cx="317" cy="5" r="1.3" fill="#3A4AA0"/><circle cx="322.5" cy="8.5" r="1.5" fill="#3A4AA0"/><line x1="318" y1="5.5" x2="322" y2="8" stroke="#3A4AA0" stroke-width="0.8"/><circle cx="320" cy="4.5" r="0.8" fill="#E04040"/><circle cx="334.5" cy="4.5" r="1.4" fill="#3A4AA0"/><line x1="335.5" y1="5.200000000000003" x2="338.79999999999995" y2="8.5" stroke="#3A4AA0" stroke-width="0.8"/><rect x="338.5" y="7.5" width="2.2" height="3.5" fill="#3A4AA0" opacity="1"/><circle cx="347.5" cy="4.5" r="1.4" fill="#3A4AA0"/><line x1="348.5" y1="5.200000000000003" x2="351.79999999999995" y2="8.5" stroke="#3A4AA0" stroke-width="0.8"/><rect x="351.5" y="7.5" width="2.2" height="3.5" fill="#3A4AA0" opacity="1"/><circle cx="360.5" cy="4.5" r="1.4" fill="#3A4AA0"/><line x1="361.5" y1="5.200000000000003" x2="364.79999999999995" y2="8.5" stroke="#3A4AA0" stroke-width="0.8"/><rect x="364.5" y="7.5" width="2.2" height="3.5" fill="#3A4AA0" opacity="1"/><circle cx="373.5" cy="4.5" r="1.4" fill="#B0B8D0"/><line x1="374.5" y1="5.200000000000003" x2="377.79999999999995" y2="8.5" stroke="#B0B8D0" stroke-width="0.8"/><rect x="377.5" y="7.5" width="2.2" height="3.5" fill="#B0B8D0" opacity="1"/></svg>
<!-- tree icons -->
<svg class="a" style="left:6px;top:79px" width="30" height="46" viewBox="0 0 30 46">
 <g transform="translate(1,1)">
  <path d="M0.5 3 L2 1 L7 1 L7 3Z" fill="#1A2030"/>
  <rect x="0.5" y="2.5" width="6.5" height="5" fill="#5A6A90" stroke="#2A3050" stroke-width="0.6"/>
  <rect x="2" y="4" width="3.5" height="2" fill="#C8D4EA"/>
 </g>
 <path d="M3 14 L5.5 14 L5.5 11.5Z" fill="#222"/>
 <g transform="translate(8,10)">
  <path d="M0.5 3 L2 1 L7 1 L7 3Z" fill="#1A2030"/>
  <rect x="0.5" y="2.5" width="6.5" height="5" fill="#5A6A90" stroke="#2A3050" stroke-width="0.6"/>
  <rect x="2" y="4" width="3.5" height="2" fill="#C8D4EA"/>
 </g>
 <path d="M11 20.5 L13 22 L11 23.5Z" fill="none" stroke="#AAA" stroke-width="0.6"/>
 <path d="M11 29 L13 30.5 L11 32Z" fill="none" stroke="#AAA" stroke-width="0.6"/>
 <g transform="translate(16,19)">
  <rect x="0" y="1.5" width="6.5" height="5.5" fill="#3CC040" stroke="#206020" stroke-width="0.5"/>
  <rect x="2.5" y="1" width="1.2" height="6.5" fill="#1A5A1A"/>
  <rect x="0" y="3" width="6.5" height="0.8" fill="#1A5A1A"/>
  <path d="M1 1 L3 0 L5.5 0.5" fill="none" stroke="#206020" stroke-width="0.6"/>
 </g>
 <g transform="translate(16,28)">
  <rect x="0" y="1.5" width="6.5" height="5.5" fill="#3CC040" stroke="#206020" stroke-width="0.5"/>
  <rect x="2.5" y="1" width="1.2" height="6.5" fill="#1A5A1A"/>
  <rect x="0" y="3" width="6.5" height="0.8" fill="#1A5A1A"/>
  <path d="M1 1 L3 0 L5.5 0.5" fill="none" stroke="#206020" stroke-width="0.6"/>
 </g>
 <g transform="translate(8,36.5)">
  <rect x="0" y="0" width="7.5" height="7.3" fill="#8A8A8A" stroke="#505050" stroke-width="0.5"/>
  <rect x="1" y="1" width="2.2" height="2.2" fill="#E0E0E0"/><rect x="4.3" y="1" width="2.2" height="2.2" fill="#E0E0E0"/>
  <rect x="1" y="4.2" width="2.2" height="2.2" fill="#E0E0E0"/><rect x="4.3" y="4.2" width="2.2" height="2.2" fill="#E0E0E0"/>
 </g>
</svg>

</body></html>
